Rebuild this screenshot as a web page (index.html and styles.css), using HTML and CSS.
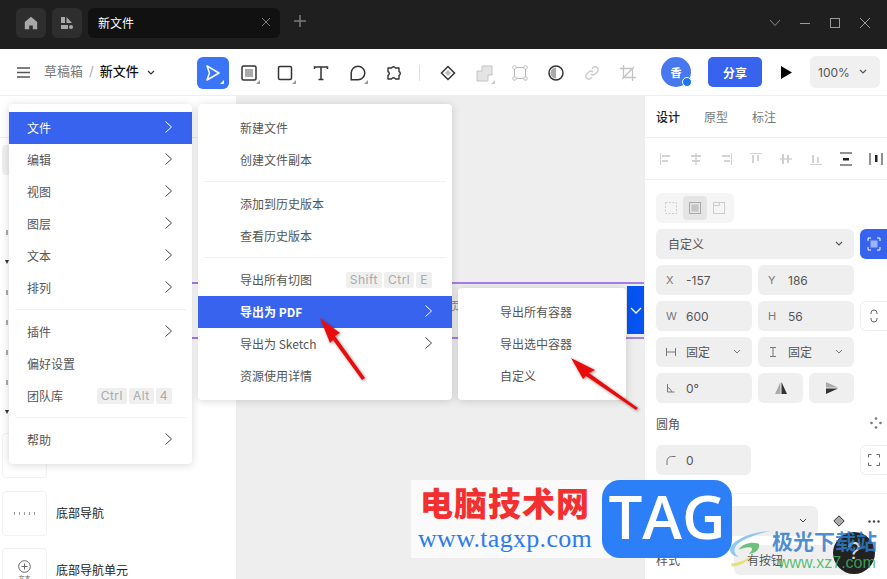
FILE: index.html
```html
<!DOCTYPE html>
<html lang="zh">
<head>
<meta charset="utf-8">
<title>新文件</title>
<link rel="stylesheet" href="styles.css">
</head>
<body>
<div class="app">
  <header class="titlebar">
    <button class="tb-btn"><svg width="14" height="14" viewBox="0 0 14 14"><path d="M7 .8 13.2 6v7.2H8.800V9.400H5.200v3.800H.8V6z" fill="#a8a8a8"/></svg></button>
    <button class="tb-btn"><svg width="14" height="14" viewBox="0 0 14 14"><path d="M1 1h4v6H1zM6.500 1 12 7H6.500zM1 9h7v4H1z" fill="#a8a8a8"/><circle cx="11" cy="11" r="2" fill="#a8a8a8"/></svg></button>
    <div class="tab"><span>新文件</span><svg width="10" height="10" viewBox="0 0 10 10"><path d="M1 1l8 8M9 1l-8 8" stroke="#7c7c7c" fill="none"/></svg></div>
    <svg class="plus" width="14" height="14" viewBox="0 0 14 14"><path d="M7 1v12M1 7h12" stroke="#7c7c7c" stroke-width="1.500" fill="none"/></svg>
    <div class="win">
      <svg width="12" height="8" viewBox="0 0 12 8"><path d="M1 1l5 5.500L11 1" stroke="#8a8a8a" fill="none"/></svg>
      <svg width="12" height="12" viewBox="0 0 12 12"><path d="M1 6.500h10" stroke="#9a9a9a" fill="none"/></svg>
      <svg width="12" height="12" viewBox="0 0 12 12"><rect x="1.500" y="1.500" width="9" height="9" stroke="#9a9a9a" fill="none"/></svg>
      <svg width="12" height="12" viewBox="0 0 12 12"><path d="M1 1l10 10M11 1 1 11" stroke="#9a9a9a" fill="none"/></svg>
    </div>
  </header>

  <nav class="toolbar">
    <svg class="burger" width="13" height="11" viewBox="0 0 13 11"><path d="M0 1h13M0 5.500h13M0 10h13" stroke="#555" stroke-width="1.500" fill="none"/></svg>
    <span class="crumb">草稿箱</span><span class="slash">/</span><span class="fname">新文件</span>
    <svg class="fchev" width="8" height="6" viewBox="0 0 8 6"><path d="M1 1l3 3 3-3" stroke="#333" stroke-width="1.200" fill="none"/></svg>
    <div class="tools">
      <span class="tool active"><svg width="16" height="18" viewBox="0 0 16 18"><path d="M2 2l12 7-12 7 2.500-7z" stroke="#fff" stroke-width="1.500" fill="none" stroke-linejoin="round"/></svg></span>
      <span class="tool"><svg width="16" height="16" viewBox="0 0 16 16"><rect x="1" y="1" width="14" height="14" rx="1.500" stroke="#333" stroke-width="1.500" fill="none"/><rect x="4" y="4" width="8" height="8" fill="#aaa"/></svg></span>
      <span class="tool"><svg width="16" height="16" viewBox="0 0 16 16"><rect x="1.500" y="1.500" width="13" height="13" rx="1.500" stroke="#333" stroke-width="1.500" fill="none"/></svg></span>
      <span class="tool plain"><svg width="16" height="16" viewBox="0 0 16 16"><path d="M1.500 4V2h13v2M8 2v12.500M5.500 14.500h5" stroke="#333" stroke-width="1.500" fill="none"/></svg></span>
      <span class="tool"><svg width="17" height="16" viewBox="0 0 17 16"><path d="M9 1.200a6.800 6.800 0 0 1 0 13.600H2.200V8A6.800 6.800 0 0 1 9 1.200z" stroke="#333" stroke-width="1.500" fill="none"/></svg></span>
      <span class="tool plain"><svg width="17" height="17" viewBox="0 0 17 17"><path d="M3 3h3.500a2.200 2.200 0 0 1 4 0H14v3.500a2.200 2.200 0 0 1 0 4V14h-3.500a2.200 2.200 0 0 0-4 0H3v-3.500a2.200 2.200 0 0 0 0-4z" stroke="#333" stroke-width="1.400" fill="none" stroke-linejoin="round"/></svg></span>
      <i class="tool-sep"></i>
      <span class="tool plain"><svg width="16" height="16" viewBox="0 0 16 16"><path d="M8 1.500 14.500 8 8 14.500 1.500 8z" stroke="#333" stroke-width="1.500" fill="none"/><path d="M8 5 11 8 8 11 5 8z" fill="#bbb"/></svg></span>
      <span class="tool pale"><svg width="17" height="17" viewBox="0 0 17 17"><path d="M6 1h10v9h-4v6H1V6h5z" fill="#e4e4e4" stroke="#c4c4c4"/></svg></span>
      <span class="tool plain"><svg width="16" height="16" viewBox="0 0 16 16"><rect x="2.500" y="2.500" width="11" height="11" stroke="#bbb" fill="none"/><g fill="#fff" stroke="#bbb"><circle cx="2.500" cy="2.500" r="1.800"/><circle cx="13.500" cy="2.500" r="1.800"/><circle cx="2.500" cy="13.500" r="1.800"/><circle cx="13.500" cy="13.500" r="1.800"/></g></svg></span>
      <span class="tool plain"><svg width="16" height="16" viewBox="0 0 16 16"><circle cx="8" cy="8" r="7" stroke="#333" stroke-width="1.500" fill="none"/><path d="M8 2.500a5.500 5.500 0 0 0 0 11z" fill="#aaa"/></svg></span>
      <span class="tool plain"><svg width="16" height="16" viewBox="0 0 16 16"><path d="M7 9a3 3 0 0 0 4.200 0l2.300-2.300a3 3 0 0 0-4.200-4.200L8 3.800M9 7a3 3 0 0 0-4.200 0L2.500 9.300a3 3 0 0 0 4.200 4.200L8 12.200" stroke="#ccc" stroke-width="1.300" fill="none"/></svg></span>
      <span class="tool plain"><svg width="16" height="16" viewBox="0 0 16 16"><path d="M3.500 0v12.500H16M0 3.500h12.500V16M2 14 14 2" stroke="#c4c4c4" stroke-width="1.300" fill="none"/></svg></span>
    </div>
    <div class="tb-right">
      <span class="avatar">香<i class="dot"></i></span>
      <button class="share">分享</button>
      <svg class="play" width="11" height="13" viewBox="0 0 11 13"><path d="M0 0l11 6.500L0 13z" fill="#000"/></svg>
      <span class="zoom-box">100%<svg width="8" height="6" viewBox="0 0 8 6"><path d="M1 1l3 3 3-3" stroke="#555" stroke-width="1.200" fill="none"/></svg></span>
    </div>
  </nav>

  <main class="work">
    <aside class="left">
      <div class="left-head"></div>
      <div class="left-sel"></div>
      <div class="left-ticks"><i></i><b></b><i></i><i></i><i></i><i></i><b></b></div>
      <div class="comp first"><div class="thumb"></div></div>
      <div class="comp"><div class="thumb dots"><i></i><i></i><i></i><i></i><i></i></div><span>底部导航</span></div>
      <div class="comp"><div class="thumb add"><svg width="13" height="13" viewBox="0 0 13 13"><circle cx="6.500" cy="6.500" r="5.800" stroke="#666" fill="none"/><path d="M6.500 3.500v6M3.500 6.500h6" stroke="#666" fill="none"/></svg><em>文本</em></div><span>底部导航单元</span></div>
    </aside>

    <section class="canvas">
      <div class="frame">
        <span class="frame-label">页面标题</span>
        <div class="frame-btn"><svg width="12" height="7" viewBox="0 0 12 7"><path d="M1 1l5 5 5-5" stroke="#fff" stroke-width="1.300" fill="none"/></svg></div>
      </div>
    </section>

    <aside class="right">
      <div class="tabs"><b>设计</b><span>原型</span><span>标注</span></div>
      <div class="aligns">
        <svg width="14" height="14" viewBox="0 0 14 14"><path d="M1.500 1v12" stroke="#d4d4d4"/><path d="M3 3h8v2H3zM3 8h6v2H3z" fill="#d4d4d4"/></svg>
        <svg width="14" height="14" viewBox="0 0 14 14"><path d="M7 1v12" stroke="#bbb"/><path d="M2 3h10v2H2zM3 8h8v2H3z" fill="#d0d0d0"/></svg>
        <svg width="14" height="14" viewBox="0 0 14 14"><path d="M12.500 1v12" stroke="#d4d4d4"/><path d="M3 3h8v2H3zM5 8h6v2H5z" fill="#d4d4d4"/></svg>
        <svg width="14" height="14" viewBox="0 0 14 14"><path d="M1 1.500h12" stroke="#d4d4d4"/><path d="M3 3h2v8H3zM8 3h2v6H8z" fill="#d4d4d4"/></svg>
        <svg width="14" height="14" viewBox="0 0 14 14"><path d="M1 7h12" stroke="#bbb"/><path d="M3 2h2v10H3zM8 3h2v8H8z" fill="#d0d0d0"/></svg>
        <svg width="14" height="14" viewBox="0 0 14 14"><path d="M1 12.500h12" stroke="#d4d4d4"/><path d="M3 3h2v8H3zM8 5h2v6H8z" fill="#d4d4d4"/></svg>
        <svg width="14" height="14" viewBox="0 0 14 14"><path d="M1 1h12M1 13h12" stroke="#222"/><path d="M4 6h6v2.500H4z" fill="#222"/></svg>
        <svg width="14" height="14" viewBox="0 0 14 14"><path d="M1 1v12M13 1v12" stroke="#555" stroke-width="1.300"/><path d="M6 3h2.500v7H6z" fill="#222"/></svg>
      </div>
      <div class="props">
        <div class="seg">
          <span class="seg-i"><svg width="12" height="12" viewBox="0 0 12 12"><rect x=".5" y=".5" width="11" height="11" stroke="#ccc" stroke-dasharray="2 1.500" fill="none"/></svg></span>
          <span class="seg-i on"><svg width="12" height="12" viewBox="0 0 12 12"><rect x=".5" y=".5" width="11" height="11" stroke="#aaa" fill="none"/><rect x="2.500" y="2.500" width="7" height="7" fill="#c4c4c4"/></svg></span>
          <span class="seg-i"><svg width="12" height="12" viewBox="0 0 12 12"><rect x=".5" y=".5" width="11" height="11" stroke="#ccc" fill="none"/><path d="M.5 3.500h6v-3" stroke="#ccc" fill="none"/></svg></span>
        </div>
        <div class="row"><div class="field wide"><span class="val">自定义</span><svg class="chev" width="8" height="6" viewBox="0 0 8 6"><path d="M1 1l3 3 3-3" stroke="#555" stroke-width="1.100" fill="none"/></svg></div>
          <span class="fit"><svg width="14" height="14" viewBox="0 0 14 14"><path d="M1 4V1h3M10 1h3v3M13 10v3h-3M4 13H1v-3" stroke="#fff" fill="none"/><rect x="3.500" y="3.500" width="7" height="7" fill="#9db5f5"/></svg></span></div>
        <div class="row"><div class="field half"><i class="k">X</i><span class="val">-157</span></div><div class="field half"><i class="k">Y</i><span class="val">186</span></div></div>
        <div class="row"><div class="field half"><i class="k">W</i><span class="val">600</span></div><div class="field half"><i class="k">H</i><span class="val">56</span></div>
          <span class="ghost"><svg width="8" height="14" viewBox="0 0 8 14"><path d="M1 5V4a3 3 0 0 1 6 0v1M1 9v1a3 3 0 0 0 6 0V9" stroke="#666" fill="none"/></svg></span></div>
        <div class="row"><div class="field half"><svg class="ki" width="10" height="8" viewBox="0 0 10 8"><path d="M.5 0v8M9.500 0v8M.5 4h9" stroke="#777" fill="none"/></svg><span class="val">固定</span><svg class="chev" width="8" height="6" viewBox="0 0 8 6"><path d="M1 1l3 3 3-3" stroke="#777" fill="none"/></svg></div>
          <div class="field half"><svg class="ki" width="10" height="10" viewBox="0 0 10 10"><path d="M2 .5h6M2 9.500h6M5 .5v9" stroke="#777" fill="none"/></svg><span class="val">固定</span><svg class="chev" width="8" height="6" viewBox="0 0 8 6"><path d="M1 1l3 3 3-3" stroke="#777" fill="none"/></svg></div></div>
        <div class="row"><div class="field half"><svg class="ki" width="10" height="10" viewBox="0 0 10 10"><path d="M1.500 1v8h7M1.500 4.500c2 .5 3.500 2 4 4.500" stroke="#777" fill="none"/></svg><span class="val">0°</span></div>
          <span class="flip"><svg width="12" height="12" viewBox="0 0 12 12"><path d="M5.500 0v12H0z" fill="#aaa"/><path d="M6.500 0v12H12z" fill="#333"/></svg></span>
          <span class="flip"><svg width="12" height="12" viewBox="0 0 12 12"><path d="M0 5.500h12L0 0z" fill="#aaa"/><path d="M0 6.500h12L0 12z" fill="#333"/></svg></span></div>
        <div class="title-row"><span>圆角</span><svg width="12" height="12" viewBox="0 0 12 12" fill="#777"><circle cx="6" cy="1.500" r="1.300"/><circle cx="1.500" cy="6" r="1.300"/><circle cx="10.500" cy="6" r="1.300"/><circle cx="6" cy="10.500" r="1.300"/></svg></div>
        <div class="row between"><div class="field half"><svg class="ki" width="9" height="9" viewBox="0 0 9 9"><path d="M.5 9V5A4.500 4.500 0 0 1 5 .5h4" stroke="#777" fill="none"/></svg><span class="val">0</span></div>
          <span class="ghost big"><svg width="12" height="12" viewBox="0 0 12 12"><path d="M.5 3.500v-3h3M8.500.5h3v3M11.500 8.500v3h-3M3.500 11.500h-3v-3" stroke="#666" fill="none"/></svg></span></div>
      </div>
      <div class="comp-sec">
        <div class="row"><div class="field style"><svg class="ki" width="12" height="12" viewBox="0 0 12 12"><path d="M6 .8 11.200 6 6 11.200.8 6z" stroke="#ccc" fill="none"/></svg><span class="muted">常规屏</span><svg class="chev" width="8" height="6" viewBox="0 0 8 6"><path d="M1 1l3 3 3-3" stroke="#444" fill="none"/></svg></div>
          <svg class="dia" width="12" height="12" viewBox="0 0 12 12"><path d="M6 .8 11.200 6 6 11.200.8 6z" fill="#aaa" stroke="#333"/></svg>
          <svg class="more" width="12" height="3" viewBox="0 0 12 3" fill="#444"><circle cx="1.500" cy="1.500" r="1.200"/><circle cx="6" cy="1.500" r="1.200"/><circle cx="10.500" cy="1.500" r="1.200"/></svg></div>
        <div class="row style-row"><span class="label">样式</span><div class="field style2"><span class="val">有按钮</span></div></div>
      </div>
    </aside>
  </main>

  <div class="menu m1">
    <div class="mi hl">文件<svg class="ar" width="9" height="14" viewBox="0 0 9 14"><path d="M1.500 1.500 7.500 7l-6 5.500" stroke="#fff" fill="none"/></svg></div>
    <div class="mi">编辑<svg class="ar" width="9" height="14" viewBox="0 0 9 14"><path d="M1.500 1.500 7.500 7l-6 5.500" stroke="#444" fill="none"/></svg></div>
    <div class="mi">视图<svg class="ar" width="9" height="14" viewBox="0 0 9 14"><path d="M1.500 1.500 7.500 7l-6 5.500" stroke="#444" fill="none"/></svg></div>
    <div class="mi">图层<svg class="ar" width="9" height="14" viewBox="0 0 9 14"><path d="M1.500 1.500 7.500 7l-6 5.500" stroke="#444" fill="none"/></svg></div>
    <div class="mi">文本<svg class="ar" width="9" height="14" viewBox="0 0 9 14"><path d="M1.500 1.500 7.500 7l-6 5.500" stroke="#444" fill="none"/></svg></div>
    <div class="mi">排列<svg class="ar" width="9" height="14" viewBox="0 0 9 14"><path d="M1.500 1.500 7.500 7l-6 5.500" stroke="#444" fill="none"/></svg></div>
    <hr class="sep">
    <div class="mi">插件<svg class="ar" width="9" height="14" viewBox="0 0 9 14"><path d="M1.500 1.500 7.500 7l-6 5.500" stroke="#444" fill="none"/></svg></div>
    <div class="mi">偏好设置</div>
    <div class="mi">团队库<span class="keys"><kbd>Ctrl</kbd><kbd>Alt</kbd><kbd>4</kbd></span></div>
    <hr class="sep">
    <div class="mi">帮助<svg class="ar" width="9" height="14" viewBox="0 0 9 14"><path d="M1.500 1.500 7.500 7l-6 5.500" stroke="#444" fill="none"/></svg></div>
  </div>

  <div class="menu m2">
    <div class="mi">新建文件</div>
    <div class="mi">创建文件副本</div>
    <hr class="sep">
    <div class="mi">添加到历史版本</div>
    <div class="mi">查看历史版本</div>
    <hr class="sep">
    <div class="mi">导出所有切图<span class="keys"><kbd>Shift</kbd><kbd>Ctrl</kbd><kbd>E</kbd></span></div>
    <div class="mi hl strong">导出为 PDF<svg class="ar" width="9" height="14" viewBox="0 0 9 14"><path d="M1.500 1.500 7.500 7l-6 5.500" stroke="#fff" fill="none"/></svg></div>
    <div class="mi">导出为 Sketch<svg class="ar" width="9" height="14" viewBox="0 0 9 14"><path d="M1.500 1.500 7.500 7l-6 5.500" stroke="#444" fill="none"/></svg></div>
    <div class="mi">资源使用详情</div>
  </div>

  <div class="menu m3">
    <div class="mi">导出所有容器</div>
    <div class="mi">导出选中容器</div>
    <div class="mi">自定义</div>
  </div>

  <svg class="arrows" width="887" height="579" viewBox="0 0 887 579">
    <defs><filter id="sh" x="-30%" y="-30%" width="160%" height="160%"><feDropShadow dx="1" dy="1" stdDeviation="1.500" flood-color="#000" flood-opacity=".45"/></filter></defs>
    <g filter="url(#sh)" fill="#e8110f">
      <path d="M320 318 340 333 335 336 365 378 362 380 333 340 330 343z"/>
      <path d="M571 358 595 370 589 373 638 408 636 410 586 376 583 379z"/>
    </g>
  </svg>

  <div class="wm-left">
    <div class="wm-title">电脑技术网</div>
    <div class="wm-url">www.tagxp.com</div>
  </div>
  <div class="wm-tag">TAG</div>
  <div class="help">?</div>
  <div class="wm-xz">
    <svg width="46" height="38" viewBox="0 0 64 50" preserveAspectRatio="none"><path d="M60 1C30 3 3 14 3 27c1 5 6 8 12 8-6-3-8-8-4-14C17 13 40 5 60 1z" fill="#7cc0ea" opacity=".85"/><path d="M15 26c5-8 18-11 28-8 2 6-4 13-14 13 4-3 6-6 3-8-5-1-11 0-17 3z" fill="#58b56a" opacity=".85"/><path d="M4 44c10 0 22-4 30-12-4 7-14 15-28 16z" fill="#e8dc5a" opacity=".85"/></svg>
    <div class="xz-cn">极光下载站</div>
    <div class="xz-url">www.xz7.com</div>
  </div>
</div>
</body>
</html>
```
FILE: styles.css
```css
* { box-sizing: border-box; }
html, body { margin: 0; height: 100%; overflow: hidden; }
body { font-family: "Noto Sans CJK SC", "Inter", "Liberation Sans", sans-serif; font-size: 12px; color: #444; background: #fff; }
button { font: inherit; border: 0; padding: 0; }
.app { position: relative; width: 887px; height: 579px; display: flex; flex-direction: column; overflow: hidden; }

.titlebar { height: 49px; flex: none; background: #1f1f1f; display: flex; align-items: flex-start; padding: 8px 0 0 16px; gap: 6px; }
.tb-btn { width: 30px; height: 30px; border-radius: 6px; background: #2e2e2e; display: flex; align-items: center; justify-content: center; }
.tab { width: 192px; height: 30px; border-radius: 6px; background: #111; color: #fff; font-size: 12px; display: flex; align-items: center; justify-content: space-between; padding: 0 9px 2px 10px; }
.plus { margin: 6px 0 0 7px; }
.win { margin-left: auto; display: flex; align-items: center; gap: 18px; height: 30px; padding-right: 16px; }

.toolbar { height: 47px; flex: none; background: #fff; border-bottom: 1px solid #eee; display: flex; align-items: center; padding-left: 17px; }
.burger { margin-right: 14px; }
.crumb { color: #777; font-size: 13px; line-height: 18px; margin-bottom: 2px; }
.slash { color: #aaa; margin: 0 6px 2px 6px; font-family: "Inter", sans-serif; font-size: 13px; }
.fname { color: #111; font-weight: 500; font-size: 13px; line-height: 18px; margin-bottom: 2px; }
.fchev { margin: 1px 0 0 8px; }
.tools { position: absolute; left: 197px; top: 57px; display: flex; align-items: center; }
.tool { width: 32px; height: 32px; margin-right: 4px; border-radius: 6px; display: flex; align-items: center; justify-content: center; position: relative; }
.tool::after { content: ""; position: absolute; right: 5px; bottom: 5px; border: 2px solid transparent; border-right-color: #999; border-bottom-color: #999; }
.tool.plain::after { display: none; }
.tool.pale::after { border-right-color: #ccc; border-bottom-color: #ccc; }
.tool.active { background: #3a75f5; }
.tool.active::after { border-right-color: #fff; border-bottom-color: #fff; }
.tool-sep { width: 1px; height: 16px; background: #ddd; margin: 0 12px 0 6px; }
.tb-right { margin-left: auto; display: flex; align-items: center; padding-right: 7px; }
.avatar { width: 30px; height: 30px; border-radius: 50%; background: #4878ee; color: #fff; font-size: 11px; font-weight: 700; display: flex; align-items: center; justify-content: center; position: relative; }
.dot { position: absolute; right: -1px; bottom: 0; width: 10px; height: 10px; border-radius: 50%; background: #1a75f0; border: 1.500px solid #fff; }
.share { width: 54px; height: 30px; margin-left: 17px; border-radius: 5px; background: #3763ee; color: #fff; font-size: 12px; font-weight: 700; }
.play { margin-left: 19px; }
.zoom-box { width: 70px; height: 32px; margin-left: 18px; border-radius: 6px; background: #f0f0f0; color: #555; font-family: "Inter", sans-serif; font-size: 12px; display: flex; align-items: center; justify-content: space-between; padding: 0 13px 0 8px; }

.work { flex: 1; display: flex; min-height: 0; }
.left { width: 236px; flex: none; background: #fff; position: relative; }
.left-head { height: 42px; border-bottom: 1px solid #eee; }
.left-sel { position: absolute; left: 2px; top: 49px; width: 8px; height: 30px; background: #efefef; border-radius: 4px 0 0 4px; }
.left-ticks { position: absolute; left: 5px; top: 121px; width: 4px; display: flex; flex-direction: column; align-items: center; }
.left-ticks i { width: 2px; height: 5px; margin: 12.500px 0; background: #aaa; }
.left-ticks b { width: 0; height: 0; margin: 13px 0; border: 2px solid transparent; border-top: 4px solid #333; border-bottom: 0; }
.comp { position: absolute; left: 2px; display: flex; align-items: center; gap: 9px; font-size: 12px; color: #222; }
.comp span { padding-bottom: 2px; }
.comp.first { top: 337px; }
.comp:nth-of-type(5) { top: 395px; }
.comp:nth-of-type(6) { top: 452px; }
.thumb { width: 45px; height: 45px; border: 1px solid #f1f1f1; border-radius: 4px; background: #fff; display: flex; flex-direction: column; align-items: center; justify-content: center; }
.thumb.dots { flex-direction: row; gap: 4px; }
.dots i { width: 1px; height: 3px; background: #999; }
.add em { font-style: normal; font-size: 6px; color: #666; line-height: 9px; }

.canvas { flex: 1; background: #eee; position: relative; min-width: 0; }
.frame { position: absolute; left: -60px; right: 1px; top: 186px; height: 57px; border-top: 2px solid #a67ee8; border-bottom: 2px solid #a67ee8; }
.frame-label { position: absolute; left: 273px; top: 13px; color: #888; font-size: 12px; }
.frame-btn { position: absolute; right: 0; top: 2px; width: 17px; height: 48px; background: #0554f2; display: flex; align-items: center; justify-content: center; }

.right { width: 242px; flex: none; background: #fff; position: relative; }
.tabs { height: 42px; border-bottom: 1px solid #eee; display: flex; align-items: center; gap: 24px; padding: 0 11px; font-size: 12px; color: #777; }
.tabs b { color: #222; font-weight: 500; }
.aligns { height: 42px; border-bottom: 1px solid #eee; display: flex; align-items: center; gap: 16px; padding: 0 0 0 14px; }
.aligns svg { flex: none; }
.props { padding: 13px 0 0 11px; height: 314px; border-bottom: 1px solid #f0f0f0; }
.seg { width: 78px; height: 30px; border-radius: 6px; background: #f5f5f5; display: flex; align-items: center; padding: 3px; margin-bottom: 6px; }
.seg-i { width: 24px; height: 24px; border-radius: 4px; display: flex; align-items: center; justify-content: center; }
.seg-i.on { background: #e5e5e5; }
.row { display: flex; align-items: center; gap: 6px; margin-bottom: 6px; }
.field { height: 30px; border-radius: 6px; background: #efefef; display: flex; align-items: center; padding-left: 10px; color: #555; position: relative; }
.field.wide { width: 198px; padding-left: 12px; }
.field.half { width: 96px; }
.k, .ki { width: 10px; flex: none; margin-right: 10px; font-style: normal; color: #777; font-family: "Inter", sans-serif; font-size: 11px; }
.val { font-family: "Inter", "Noto Sans CJK SC", sans-serif; font-size: 12px; line-height: 18px; padding-top: 2px; color: #555; }
.chev { position: absolute; right: 11px; top: 12px; }
.fit { width: 27px; height: 30px; border-radius: 6px 0 0 6px; background: #3763ee; display: flex; align-items: center; justify-content: center; }
.ghost { width: 27px; height: 30px; border: 1px solid #eee; border-right: 0; border-radius: 6px 0 0 6px; display: flex; align-items: center; justify-content: center; }
.ghost.big { margin-left: 103px; }
.flip { width: 45px; height: 30px; border-radius: 6px; background: #efefef; display: flex; align-items: center; justify-content: center; }
.title-row { display: flex; justify-content: space-between; align-items: center; padding: 0 5px 2px 0; height: 20px; margin: 11px 0; color: #555; font-size: 12px; }
.comp-sec { padding: 12px 0 0 11px; }
.field.style { width: 162px; }
.muted { color: #bbb; font-size: 12px; }
.ki + .muted { margin-left: 8px; }
.dia { margin: 0 0 0 9px; }
.more { margin-left: 17px; flex: none; }
.style-row { margin-top: 9px; }
.label { width: 72px; color: #555; padding-bottom: 2px; }
.field.style2 { width: 120px; padding-left: 13px; }

.menu { position: absolute; background: #fff; border-radius: 4px; box-shadow: 0 1px 8px rgba(0,0,0,.16); padding: 8px 0; }
.m1 { left: 9px; top: 104px; width: 183px; }
.m2 { left: 198px; top: 104px; width: 254px; }
.m3 { left: 458px; top: 288px; width: 168px; }
.mi { height: 32px; display: flex; align-items: center; justify-content: space-between; padding: 0 19px 2px 0; font-size: 12px; color: #555; }
.m1 .mi { padding-left: 18px; }
.m2 .mi, .m3 .mi { padding-left: 42px; }
.mi.hl { background: #3763ee; color: #fff; }
.mi.strong { font-weight: 700; }
.ar { flex: none; }
.sep { border: 0; border-top: 1px solid #f1f1f1; margin: 5px 6px 6px; }
.keys { display: flex; gap: 2px; margin: 2px 1px 0 0; }
kbd { height: 16px; padding: 0 4px; border-radius: 2px; background: #efefef; color: #aaa; font-family: "Inter", sans-serif; font-size: 12px; line-height: 16px; letter-spacing: .5px; }

.arrows { position: absolute; left: 0; top: 0; pointer-events: none; }
.wm-left { position: absolute; left: 411px; top: 480px; width: 200px; height: 78px; background: rgba(255,255,255,.72); padding: 3px 0 0 9px; }
.wm-title { font-family: "Noto Sans CJK SC", sans-serif; font-size: 33px; line-height: 38px; font-weight: 900; letter-spacing: 1px; color: #f42f2f; }
.wm-url { font-family: "Liberation Serif", serif; font-size: 26px; line-height: 30px; letter-spacing: .3px; color: #2d7bef; margin: 3px 0 0 -2px; white-space: nowrap; }
.wm-tag { position: absolute; left: 602px; top: 480px; width: 130px; height: 78px; border-radius: 18px; background: rgba(33,120,247,.95); color: #fff; font-family: "Open Sans", sans-serif; font-weight: 600; font-size: 60px; line-height: 72px; text-align: center; }
.wm-xz { position: absolute; left: 728px; top: 527px; width: 159px; height: 52px; }
.wm-xz svg { position: absolute; left: 0; top: 3px; }
.xz-cn { position: absolute; left: 44px; top: 0; font-size: 21px; line-height: 26px; font-weight: 700; color: rgba(46,122,203,.85); white-space: nowrap; }
.xz-url { position: absolute; left: 50px; top: 26px; font-family: "Liberation Sans", sans-serif; font-size: 16px; line-height: 20px; color: rgba(60,180,90,.85); white-space: nowrap; }
.help { position: absolute; left: 833px; top: 532px; width: 42px; height: 42px; border-radius: 50%; background: #222; color: #ddd; font-family: "Liberation Sans", sans-serif; font-size: 24px; line-height: 38px; text-align: center; }
```
